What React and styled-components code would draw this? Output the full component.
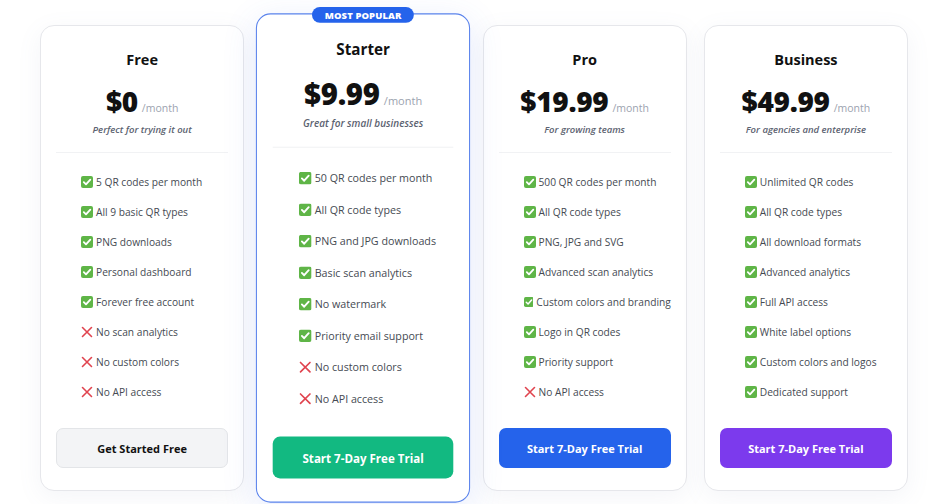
import React from 'react';
import styled, { createGlobalStyle, css } from 'styled-components';

const Global = createGlobalStyle`
  html, body {
    margin: 0;
    padding: 0;
    background: #ffffff;
    font-family: 'Open Sans', 'Noto Sans', sans-serif;
  }
`;

const Page = styled.div`
  width: 946px;
  height: 504px;
  overflow: hidden;
  box-sizing: border-box;
  padding: 25px 38px 0 40px;
`;

const Grid = styled.div`
  display: grid;
  grid-template-columns: repeat(4, minmax(0, 1fr));
  column-gap: 17px;
  height: 466px;
`;

const Card = styled.div`
  position: relative;
  display: flex;
  flex-direction: column;
  box-sizing: border-box;
  padding: 24px 15px 22px;
  background: #fff;
  border: 1px solid #e6e7eb;
  border-radius: 14px;
  box-shadow: 0 6px 24px rgba(120, 130, 170, 0.08);
  ${(p) =>
    p.popular &&
    css`
      border-color: #5a83ec;
      transform: scale(1.05);
      box-shadow: 0 8px 32px rgba(70, 110, 230, 0.13);
      z-index: 1;
    `}
`;

const Badge = styled.div`
  position: absolute;
  top: -7px;
  left: 50%;
  transform: translateX(-50%);
  background: #2563eb;
  color: #fff;
  font-size: 9px;
  font-weight: 800;
  letter-spacing: 0.1px;
  line-height: 15px;
  padding: 0 12px;
  border-radius: 9px;
  white-space: nowrap;
`;

const Title = styled.div`
  text-align: center;
  font-size: 14.5px;
  font-weight: 700;
  line-height: 20px;
  color: #111;
`;

const PriceRow = styled.div`
  display: flex;
  justify-content: center;
  align-items: baseline;
  margin-top: 13px;
  line-height: 36px;
`;

const Amount = styled.span`
  font-size: 28px;
  font-weight: 800;
  color: #111;
  letter-spacing: -0.3px;
`;

const Per = styled.span`
  margin-left: 4px;
  font-size: 10.5px;
  color: #9ca3af;
`;

const Tagline = styled.div`
  margin-top: -3px;
  text-align: center;
  font-size: 9.5px;
  font-style: italic;
  font-weight: 600;
  line-height: 14px;
  color: #5b6270;
`;

const Divider = styled.div`
  margin-top: 15px;
  height: 1px;
  background: #f1f2f4;
`;

const List = styled.ul`
  list-style: none;
  margin: 14px 0 0;
  padding: 0 0 0 25px;
`;

const Item = styled.li`
  display: flex;
  align-items: center;
  gap: 3px;
  height: 30px;
  font-size: 10.2px;
  color: #454a52;
  white-space: nowrap;
`;

const Button = styled.button`
  margin-top: auto;
  height: 40px;
  width: 100%;
  border-radius: 7px;
  font-family: inherit;
  font-size: 11px;
  font-weight: 700;
  cursor: pointer;
  ${(p) =>
    p.variant === 'light'
      ? css`
          background: #f3f4f6;
          border: 1px solid #e3e5e8;
          color: #111;
        `
      : css`
          border: none;
          color: #fff;
          background: ${p.variant};
        `}
`;

const Check = () => (
  <svg width="12" height="12" viewBox="0 0 12 12">
    <rect x="0" y="0" width="12" height="12" rx="2" fill="#5fb547" />
    <path d="M2.8 6.2 L5 8.4 L9.3 3.6" stroke="#fff" strokeWidth="1.8" fill="none" strokeLinecap="round" strokeLinejoin="round" />
  </svg>
);

const Cross = () => (
  <svg width="12" height="12" viewBox="0 0 12 12">
    <path d="M1.5 1.5 L10.5 10.5 M10.5 1.5 L1.5 10.5" stroke="#e0444f" strokeWidth="1.6" strokeLinecap="round" />
  </svg>
);

const plans = [
  {
    name: 'Free',
    price: '$0',
    tagline: 'Perfect for trying it out',
    features: [
      [true, '5 QR codes per month'],
      [true, 'All 9 basic QR types'],
      [true, 'PNG downloads'],
      [true, 'Personal dashboard'],
      [true, 'Forever free account'],
      [false, 'No scan analytics'],
      [false, 'No custom colors'],
      [false, 'No API access'],
    ],
    cta: 'Get Started Free',
    variant: 'light',
  },
  {
    name: 'Starter',
    price: '$9.99',
    tagline: 'Great for small businesses',
    popular: true,
    features: [
      [true, '50 QR codes per month'],
      [true, 'All QR code types'],
      [true, 'PNG and JPG downloads'],
      [true, 'Basic scan analytics'],
      [true, 'No watermark'],
      [true, 'Priority email support'],
      [false, 'No custom colors'],
      [false, 'No API access'],
    ],
    cta: 'Start 7-Day Free Trial',
    variant: '#12b981',
  },
  {
    name: 'Pro',
    price: '$19.99',
    tagline: 'For growing teams',
    features: [
      [true, '500 QR codes per month'],
      [true, 'All QR code types'],
      [true, 'PNG, JPG and SVG'],
      [true, 'Advanced scan analytics'],
      [true, 'Custom colors and branding'],
      [true, 'Logo in QR codes'],
      [true, 'Priority support'],
      [false, 'No API access'],
    ],
    cta: 'Start 7-Day Free Trial',
    variant: '#2563eb',
  },
  {
    name: 'Business',
    price: '$49.99',
    tagline: 'For agencies and enterprise',
    features: [
      [true, 'Unlimited QR codes'],
      [true, 'All QR code types'],
      [true, 'All download formats'],
      [true, 'Advanced analytics'],
      [true, 'Full API access'],
      [true, 'White label options'],
      [true, 'Custom colors and logos'],
      [true, 'Dedicated support'],
    ],
    cta: 'Start 7-Day Free Trial',
    variant: '#7c3aed',
  },
];

const App = () => (
  <>
    <Global />
    <Page>
      <Grid>
        {plans.map((plan) => (
          <Card key={plan.name} popular={plan.popular}>
            {plan.popular && <Badge>MOST POPULAR</Badge>}
            <Title>{plan.name}</Title>
            <PriceRow>
              <Amount>{plan.price}</Amount>
              <Per>/month</Per>
            </PriceRow>
            <Tagline>{plan.tagline}</Tagline>
            <Divider />
            <List>
              {plan.features.map(([ok, text]) => (
                <Item key={text}>
                  {ok ? <Check /> : <Cross />}
                  {text}
                </Item>
              ))}
            </List>
            <Button variant={plan.variant}>{plan.cta}</Button>
          </Card>
        ))}
      </Grid>
    </Page>
  </>
);

export default App;
